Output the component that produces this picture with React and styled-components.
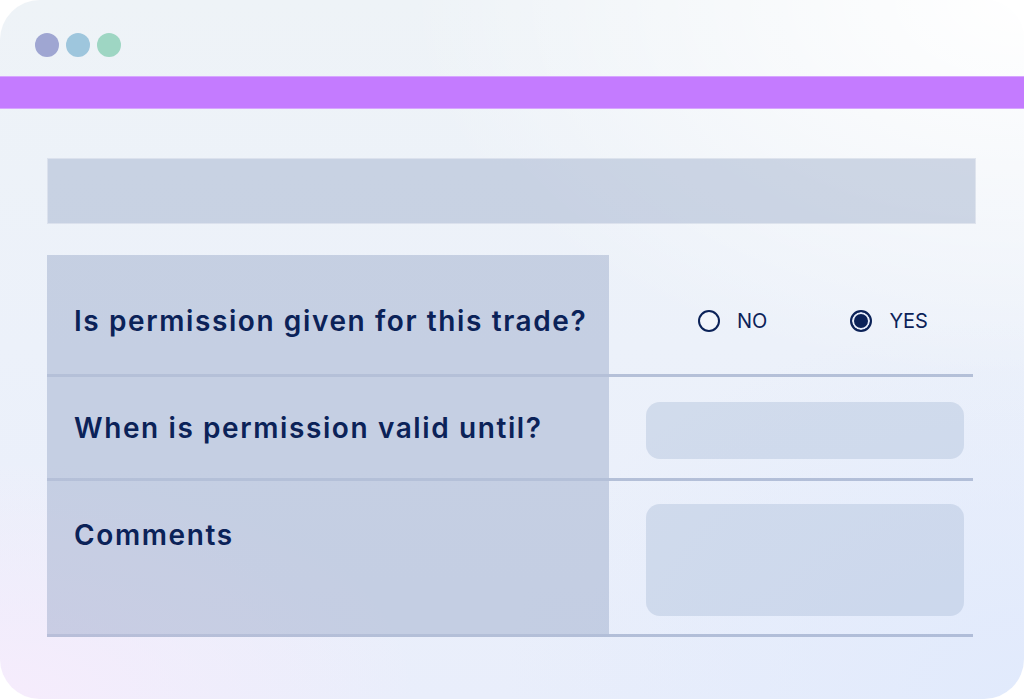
import styled, { createGlobalStyle } from "styled-components";

const GlobalStyle = createGlobalStyle`
  html, body {
    margin: 0;
    padding: 0;
    background: #ffffff;
  }
  body {
    font-family: "Inter", "Liberation Sans", sans-serif;
  }
`;

const Window = styled.div`
  width: 1024px;
  height: 699px;
  border-radius: 40px;
  overflow: hidden;
  display: flex;
  flex-direction: column;
  background:
    radial-gradient(ellipse 620px 380px at 100% 0%, rgba(255, 255, 255, 1), rgba(255, 255, 255, 0) 100%),
    radial-gradient(ellipse 420px 240px at 0% 100%, rgba(246, 236, 252, 1), rgba(246, 236, 252, 0) 100%),
    radial-gradient(ellipse 520px 380px at 100% 100%, rgba(225, 234, 252, 1), rgba(225, 234, 252, 0) 100%),
    linear-gradient(180deg, #eef3f7 0%, #ecf1fa 50%, #e9eefb 100%);
`;

const TitleBar = styled.div`
  height: 76px;
  box-sizing: border-box;
  padding: 33px 0 0 35px;
  display: flex;
  gap: 7px;
`;

const Dot = styled.span`
  width: 24px;
  height: 24px;
  border-radius: 50%;
  background: ${p => p.$color};
`;

const AccentBar = styled.div`
  height: 33px;
  background: #c47bff;
  border-top: 1px solid #d7a6ff;
  border-bottom: 1px solid #d7a6ff;
  box-sizing: border-box;
`;

const Content = styled.div`
  padding: 49px 48px 0 47px;
  display: flex;
  flex-direction: column;
`;

const Banner = styled.div`
  height: 66px;
  background: rgba(140, 158, 192, 0.38);
  border: 1px solid rgba(255, 255, 255, 0.35);
  box-sizing: border-box;
`;

const Table = styled.div`
  margin-top: 31px;
  width: 926px;
  display: flex;
  flex-direction: column;
`;

const Row = styled.div`
  display: grid;
  grid-template-columns: 562px 1fr;
  box-sizing: border-box;
  height: ${p => p.$height}px;
  border-bottom: 3px solid rgba(125, 143, 182, 0.5);
`;

const Label = styled.div`
  background: rgba(140, 158, 192, 0.4);
  display: flex;
  align-items: ${p => (p.$top ? "flex-start" : "center")};
  padding: ${p => p.$padTop || 0}px 0 0 27px;
  font-size: 28px;
  font-weight: 600;
  line-height: 30px;
  color: #0b2258;
  letter-spacing: 1.6px;
`;

const Control = styled.div`
  display: flex;
  align-items: ${p => (p.$top ? "flex-start" : "center")};
  padding: ${p => p.$pad};
`;

const RadioGroup = styled.div`
  display: flex;
  align-items: center;
  gap: 83px;
  padding-left: 89px;
`;

const Option = styled.label`
  display: flex;
  align-items: center;
  gap: 17px;
  font-size: 20px;
  color: #0b2258;
`;

const Circle = styled.span`
  width: 22px;
  height: 22px;
  box-sizing: border-box;
  border-radius: 50%;
  border: 2px solid #0b2258;
  background: ${p => (p.$checked ? "#0b2258" : "rgba(255,255,255,0.3)")};
  box-shadow: ${p => (p.$checked ? "inset 0 0 0 2px #e8eefb" : "none")};
`;

const Field = styled.div`
  width: 318px;
  height: ${p => p.$height}px;
  border-radius: 14px;
  background: rgba(160, 180, 210, 0.35);
`;

export default function App() {
  return (
    <>
      <GlobalStyle />
      <Window>
        <TitleBar>
          <Dot $color="#9fa6d2" />
          <Dot $color="#9ec6dd" />
          <Dot $color="#9ed6c3" />
        </TitleBar>
        <AccentBar />
        <Content>
          <Banner />
          <Table>
            <Row $height={122}>
              <Label $padTop={13}>Is permission given for this trade?</Label>
              <Control $pad="13px 0 0 0">
                <RadioGroup>
                  <Option>
                    <Circle />
                    NO
                  </Option>
                  <Option>
                    <Circle $checked />
                    YES
                  </Option>
                </RadioGroup>
              </Control>
            </Row>
            <Row $height={104}>
              <Label>When is permission valid until?</Label>
              <Control $pad="6px 0 0 37px">
                <Field $height={57} />
              </Control>
            </Row>
            <Row $height={156}>
              <Label $top $padTop={39}>Comments</Label>
              <Control $top $pad="23px 0 0 37px">
                <Field $height={112} />
              </Control>
            </Row>
          </Table>
        </Content>
      </Window>
    </>
  );
}
